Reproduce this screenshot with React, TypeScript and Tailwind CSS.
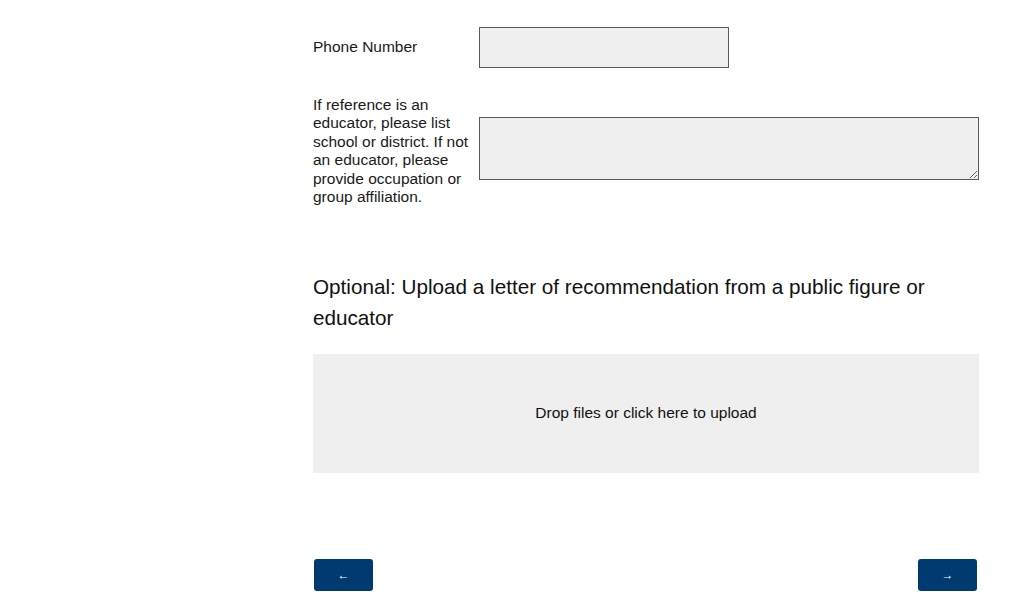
import React from 'react';

const font = { fontFamily: '"Liberation Sans", Arial, sans-serif' };

export default function App() {
  return (
    <div className="min-h-screen bg-white text-[#1a1a1a]" style={font}>
      <div className="ml-[313px] w-[666px] pt-[27px] pb-4">
        {/* phone row */}
        <div className="flex items-center">
          <label className="w-[166px] shrink-0 text-[15.5px] leading-[18.4px]">Phone Number</label>
          <input
            type="text"
            className="w-[250px] h-[41px] bg-[#f0f0f0] border border-[#5a5a5a] px-2 text-[15px] outline-none"
          />
        </div>

        {/* occupation row */}
        <div className="flex items-start mt-[28px]">
          <label className="w-[166px] shrink-0 pr-1 text-[15.5px] leading-[18.4px]">
            If reference is an educator, please list school or district. If not an educator, please provide occupation or group affiliation.
          </label>
          <textarea className="flex-1 mt-[21px] h-[63px] bg-[#f0f0f0] border border-[#5a5a5a] px-2 text-[15px] outline-none block" />
        </div>

        {/* upload */}
        <h2 className="mt-[65px] text-[20.7px] leading-[31px] text-[#111]">
          Optional: Upload a letter of recommendation from a public figure or educator
        </h2>
        <div className="mt-[21px] h-[119px] pb-[3px] bg-[#efefef] flex items-center justify-center text-[15.5px] text-[#111] cursor-pointer">
          Drop files or click here to upload
        </div>

        {/* nav */}
        <div className="mt-[86px] flex justify-between px-[1px]">
          <button className="w-[59px] h-[32px] rounded-[3px] bg-[#003a70] text-white text-[12px] flex items-center justify-center">
            ←
          </button>
          <button className="w-[59px] h-[32px] mr-[1px] rounded-[3px] bg-[#003a70] text-white text-[12px] flex items-center justify-center">
            →
          </button>
        </div>
      </div>
    </div>
  );
}
